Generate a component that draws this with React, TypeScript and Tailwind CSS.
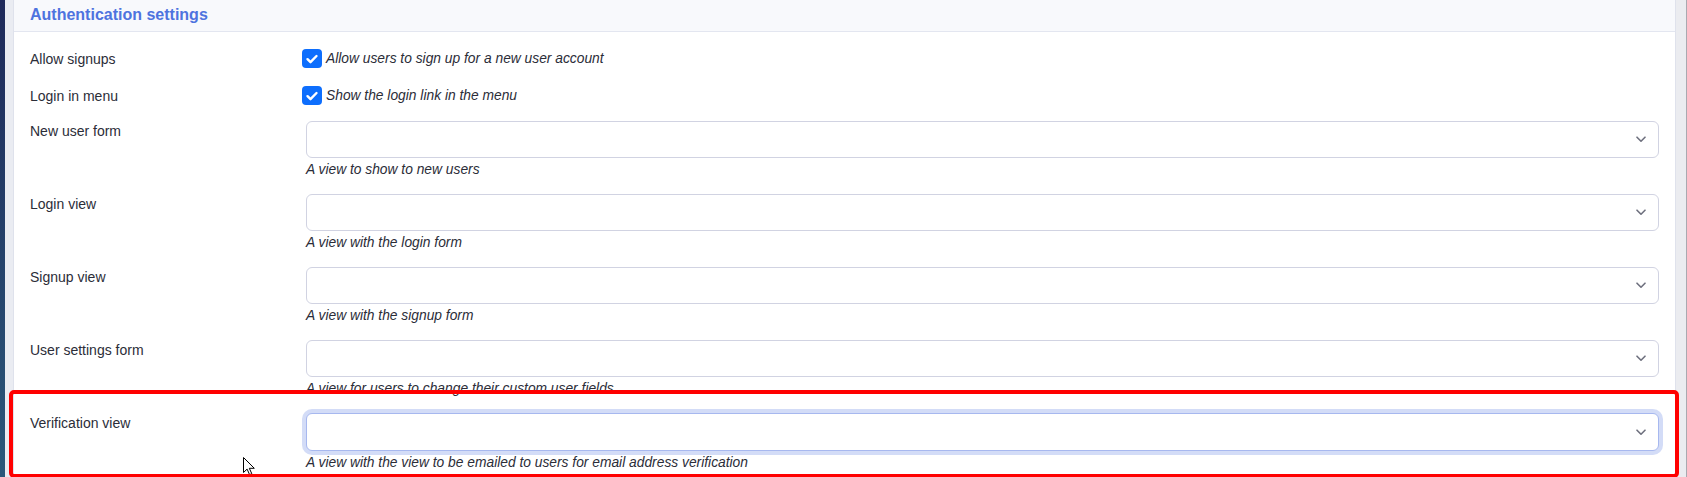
import React from "react";

const font = { fontFamily: '"Liberation Sans", Arial, sans-serif' };

type Field =
  | { kind: "check"; label: string; text: string }
  | { kind: "select"; label: string; help: string; focused?: boolean };

const fields: Field[] = [
  { kind: "check", label: "Allow signups", text: "Allow users to sign up for a new user account" },
  { kind: "check", label: "Login in menu", text: "Show the login link in the menu" },
  { kind: "select", label: "New user form", help: "A view to show to new users" },
  { kind: "select", label: "Login view", help: "A view with the login form" },
  { kind: "select", label: "Signup view", help: "A view with the signup form" },
  { kind: "select", label: "User settings form", help: "A view for users to change their custom user fields" },
  {
    kind: "select",
    label: "Verification view",
    help: "A view with the view to be emailed to users for email address verification",
    focused: true
  }
];

function Checkbox() {
  return (
    <span className="flex h-[19px] w-[20px] shrink-0 items-center justify-center rounded-[4px] bg-[#0d6efd]">
      <svg width="14" height="14" viewBox="0 0 14 14" fill="none">
        <path d="M2.5 7.2l3 3 6-6.2" stroke="#fff" strokeWidth="2.4" strokeLinecap="round" strokeLinejoin="round" />
      </svg>
    </span>
  );
}

function SelectBox({ focused }: { focused?: boolean }) {
  return (
    <div
      className={
        focused
          ? "flex h-[38px] items-center justify-end rounded-[6px] border border-[#a7b8ef] bg-white pr-[12px] shadow-[0_0_0_4px_rgba(78,115,223,0.25)]"
          : "flex h-[37px] items-center justify-end rounded-[6px] border border-[#d1d3e2] bg-white pr-[12px]"
      }
    >
      <svg width="10" height="7" viewBox="0 0 10 7" fill="none">
        <path d="M1 1.2l4 4 4-4" stroke="#6e707e" strokeWidth="1.6" strokeLinecap="round" strokeLinejoin="round" />
      </svg>
    </div>
  );
}

function Row({ field }: { field: Field }) {
  if (field.kind === "check") {
    return (
      <div className="flex h-[19px] items-center">
        <div className="w-[276px] shrink-0 text-[14px] leading-[20px] text-[#2b2d38]">{field.label}</div>
        <div className="-ml-[4px] flex items-center gap-[4px]">
          <Checkbox />
          <span className="mt-[1px] text-[13.8px] italic leading-[20px] text-[#2b2d38]">{field.text}</span>
        </div>
      </div>
    );
  }
  return (
    <div className="flex">
      <div className="w-[276px] shrink-0 text-[14px] leading-[20px] text-[#2b2d38]">{field.label}</div>
      <div className="flex-1">
        <SelectBox focused={field.focused} />
        <div className="mt-[2px] text-[13.8px] italic leading-[20px] text-[#2b2d38]">{field.help}</div>
      </div>
    </div>
  );
}

export default function App() {
  const checks = fields.filter((f) => f.kind === "check");
  const selects = fields.filter((f) => f.kind === "select");
  return (
    <div className="relative flex h-[477px] w-[1687px] overflow-hidden bg-[#eaecf2]" style={font}>
      <div className="w-[5px] shrink-0 bg-gradient-to-b from-[#1e295a] to-[#2b587a]" />
      <div className="flex-1 pl-[8px]">
        <div className="h-full border-x border-[#dfe2ec] bg-white">
          <div className="flex h-[32px] items-start border-b border-[#e3e6f0] bg-[#f8f9fc] pl-[16px] pt-[5px]">
            <h2 className="text-[16px] font-bold leading-[20px] text-[#4e73df]">Authentication settings</h2>
          </div>
          <div className="pl-[16px] pr-[16px] pt-[17px]">
            <div className="flex flex-col gap-[18px]">
              {checks.map((f) => (
                <Row key={f.label} field={f} />
              ))}
            </div>
            <div className="mt-[16px] flex flex-col gap-[14px]">
              {selects.map((f) => (
                <Row key={f.label} field={f} />
              ))}
            </div>
          </div>
        </div>
      </div>
      <div className="w-[11px] shrink-0 border-r border-[#a9a9b0] bg-[#ebecf0]" />

      {/* mouse pointer */}
      <svg className="absolute left-[243px] top-[457px]" width="12" height="18" viewBox="0 0 12 18">
        <path d="M0.5 0.5v15l3.6-3.4 2.5 5.6 2.2-1-2.5-5.4h5z" fill="#fff" stroke="#000" strokeWidth="1" strokeLinejoin="round" />
      </svg>

      {/* highlight annotation */}
      <div className="pointer-events-none absolute left-[9px] top-[390px] h-[88px] w-[1670px] rounded-[5px] border-[4px] border-[#ff0000]" />
    </div>
  );
}
